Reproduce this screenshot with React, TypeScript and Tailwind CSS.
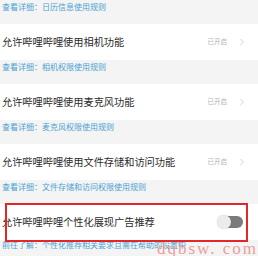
import { ChevronRight } from "lucide-react";

const rows = [
  { title: "允许哔哩哔哩使用相机功能", on: true, nextLink: "查看详细：相机权限使用规则" },
  { title: "允许哔哩哔哩使用麦克风功能", on: true, nextLink: "查看详细：麦克风权限使用规则" },
  { title: "允许哔哩哔哩使用文件存储和访问功能", on: true, nextLink: "查看详细：文件存储和访问权限使用规则" },
  { title: "允许哔哩哔哩个性化展现广告推荐", on: false, nextLink: "前往了解：个性化推荐相关要求且需在帮助的设置中" },
];

function LinkBand({ text }: { text: string }) {
  return (
    <div className="h-[24px] px-[2px] pt-[2px] text-[8px] leading-[10px] text-[#4aa2d2]">
      {text}
    </div>
  );
}

function Toggle() {
  return (
    <div className="relative h-[12px] w-[25px] rounded-full bg-[#7b7b7b]">
      <div className="absolute left-[-1px] top-[-1px] h-[14px] w-[14px] rounded-full bg-[#ececec] shadow-[0_0_1px_rgba(0,0,0,0.25)]" />
    </div>
  );
}

export default function App() {
  return (
    <div
      className="relative h-[256px] w-[258px] overflow-hidden bg-[#f4f4f4]"
      style={{ fontFamily: '"Noto Sans CJK SC", "Noto Sans", sans-serif' }}
    >
      <LinkBand text="查看详细：日历信息使用规则" />
      {rows.map((r, i) => (
        <div key={r.title}>
          <div className="flex h-[36px] items-center bg-white pl-[2px] pr-[10px]">
            <span className="flex-1 text-[10.2px] text-[#2b2b2b]">{r.title}</span>
            {r.on ? (
              <div className="flex items-center gap-[9px]">
                <span className="text-[6.5px] text-[#b5b5b5]">已开启</span>
                <ChevronRight className="h-[12px] w-[12px] text-[#c4c4c4]" strokeWidth={1.5} />
              </div>
            ) : (
              <div className="pr-[5px]">
                <Toggle />
              </div>
            )}
          </div>
          {i === rows.length - 1 ? (
            <div className="px-[2px] pt-[0px] text-[8px] leading-[10px] text-[#4aa2d2]">{r.nextLink}</div>
          ) : (
            <LinkBand text={r.nextLink} />
          )}
        </div>
      ))}

      {/* highlight box */}
      <div className="absolute left-[5px] top-[203px] h-[39px] w-[243px] border-2 border-[#e3262a]" />

      {/* watermark */}
      <div
        className="absolute bottom-[-5px] right-[0px] text-[17px] tracking-[2px] text-[#e98a86] opacity-80"
        style={{ fontFamily: '"Liberation Serif", serif' }}
      >
        dqbsw. com
      </div>
    </div>
  );
}
